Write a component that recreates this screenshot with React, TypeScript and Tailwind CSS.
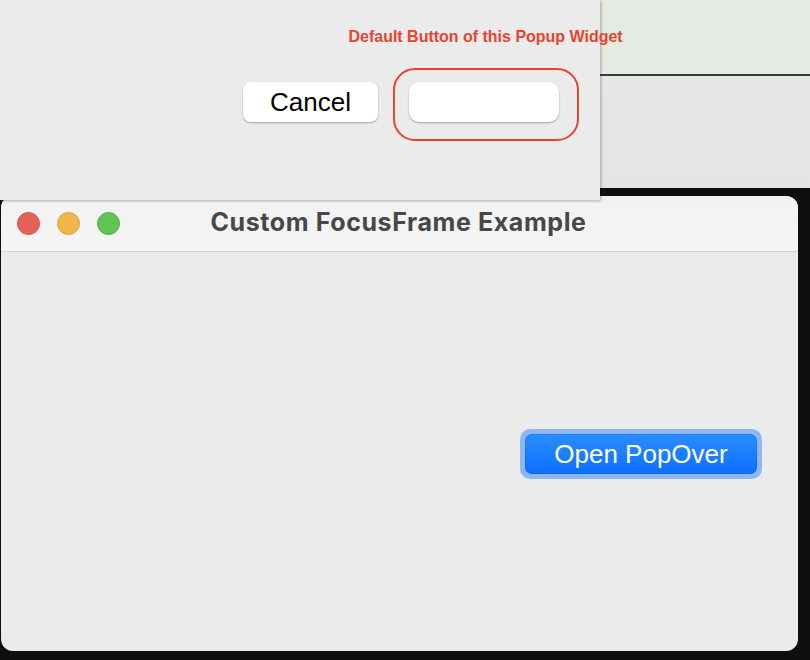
import React from "react";

const sans = "font-['Liberation_Sans',Arial,sans-serif]";

const TrafficLights = () => (
  <div className="flex items-center gap-[17px] pl-[16px]">
    <div className="w-[23px] h-[23px] rounded-full bg-[#e5625a] border border-[#d25048]" />
    <div className="w-[23px] h-[23px] rounded-full bg-[#eeb84b] border border-[#d9a23a]" />
    <div className="w-[23px] h-[23px] rounded-full bg-[#62c454] border border-[#52ad45]" />
  </div>
);

const App = () => {
  return (
    <div className={`relative w-[810px] h-[660px] overflow-hidden bg-[#0e1010] ${sans}`}>
      {/* desktop behind */}
      <div className="h-[188px] flex flex-col">
        <div className="h-[74px] bg-[#e5ebe3]" />
        <div className="h-[2px] bg-[#3a3a3a]" />
        <div className="flex-1 bg-gradient-to-b from-[#e6e7e6] to-[#e3e4e3]" />
      </div>

      {/* main window */}
      <div className="mt-[8px] ml-[1px] w-[797px] h-[455px] rounded-[12px] bg-[#ebebeb] overflow-hidden flex flex-col">
        <div className="h-[56px] shrink-0 bg-gradient-to-b from-[#f2f2f2] to-[#f5f5f5] border-b border-[#d3d3d3] flex items-center relative">
          <TrafficLights />
          <div className="absolute inset-0 flex items-center justify-center">
            <span className="font-['Inter',sans-serif] font-bold text-[25px] text-[#474747] tracking-[0.6px] ml-[-2px] mt-[-1px]">
              Custom FocusFrame Example
            </span>
          </div>
        </div>
        <div className="flex-1 flex items-start justify-end pt-[177px] pr-[36px]">
          <div className="rounded-[10px] bg-[#8fb7f2] p-[5px]">
            <button className="w-[232px] h-[40px] rounded-[7px] bg-gradient-to-b from-[#2b8dff] to-[#0b6ffd] text-white text-[26px] leading-none flex items-center justify-center shadow-[inset_0_0_0_1px_rgba(0,80,220,0.25)]">
              Open PopOver
            </button>
          </div>
        </div>
      </div>

      {/* popover */}
      <div className="absolute left-0 top-0 w-[600px] h-[200px] bg-[#ebebeb] shadow-[1px_1px_3px_rgba(0,0,0,0.3)]">
        <div className="flex justify-end">
          <span className="mt-[27px] mr-[-23px] font-bold text-[17px] leading-[20px] text-[#e8432c] scale-x-[0.94] origin-right whitespace-nowrap">
            Default Button of this Popup Widget
          </span>
        </div>
        <div className="flex items-start justify-end gap-[15px] pr-[21px] mt-[21px]">
          <button className="mt-[14px] w-[135px] h-[40px] rounded-[8px] bg-white text-black text-[26px] leading-none shadow-[0_1px_2px_rgba(0,0,0,0.3)]">
            Cancel
          </button>
          <div className="w-[186px] h-[73px] rounded-[22px] border-2 border-[#e8432c] pt-[12px] pl-[14px]">
            <button className="w-[150px] h-[40px] rounded-[10px] bg-white shadow-[0_1px_2px_rgba(0,0,0,0.3)]" />
          </div>
        </div>
      </div>
    </div>
  );
};

export default App;
